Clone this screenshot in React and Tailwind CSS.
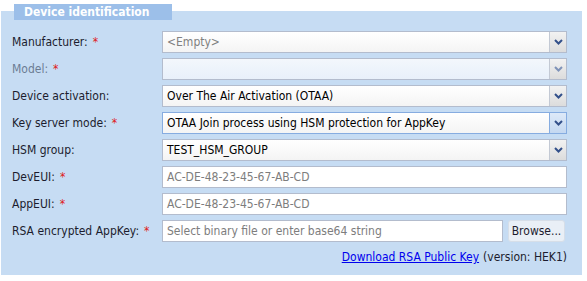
const font = { fontFamily: '"DejaVu Sans Condensed", "DejaVu Sans", sans-serif' };

function Chevron({ light }) {
  return (
    <svg width="9" height="6" viewBox="0 0 9 6">
      <path d="M1 1 L4.5 4.5 L8 1" fill="none" stroke={light ? "#7f93b8" : "#33508a"} strokeWidth="2" />
    </svg>
  );
}

function Label({ text, required, disabled }) {
  return (
    <div className={`w-[150px] shrink-0 pl-[11px] ${disabled ? "text-[#6c7c93]" : "text-[#1c1c2e]"}`}>
      {text}
      {required && <span className="ml-[5px] text-[#e01818]">*</span>}
    </div>
  );
}

function Select({ value, placeholder, disabled, focused }) {
  return (
    <div
      className={`ml-[11px] flex h-[22px] w-[405px] items-stretch border ${
        focused ? "border-[#86ace0]" : "border-[#b3bccd]"
      } ${disabled ? "bg-gradient-to-b from-[#f3f7fc] to-[#e8f0fa]" : "bg-gradient-to-b from-white to-[#f4f4f4]"}`}
    >
      <div className={`flex flex-1 items-center pl-[4px] ${placeholder ? "text-[#808080]" : "text-black"}`}>
        {value}
      </div>
      <div
        className={`flex w-[17px] items-center justify-center border-l ${
          focused ? "border-[#86ace0] bg-gradient-to-b from-[#dde9f8] to-[#c4d8f1]" : "border-[#c3c9d4] bg-gradient-to-b from-[#f2f2f2] to-[#dcdcdc]"
        }`}
      >
        <Chevron light={disabled} />
      </div>
    </div>
  );
}

function Input({ placeholder, width = "w-[405px]" }) {
  return (
    <div className={`ml-[11px] flex h-[22px] ${width} items-center border border-[#b3bccd] bg-white pl-[4px] text-[#7d7d7d]`}>
      {placeholder}
    </div>
  );
}

function Row({ children }) {
  return <div className="flex h-[27px] items-center">{children}</div>;
}

export default function App() {
  return (
    <div className="h-[281px] w-[587px] bg-white text-[12px]" style={font}>
      <div className="relative pl-[1px] pt-[11px]">
        <div className="absolute left-[14px] top-[4px] flex h-[16px] w-[158px] items-center bg-[#9cbfe9] pl-[10px] text-[12px] font-bold text-white">
          Device identification
        </div>
        <div className="h-[264px] w-[581px] bg-[#c6dcf3] pt-[17px]">
          <Row>
            <Label text="Manufacturer:" required />
            <Select value="<Empty>" placeholder />
          </Row>
          <Row>
            <Label text="Model:" required disabled />
            <Select value="" disabled />
          </Row>
          <Row>
            <Label text="Device activation:" />
            <Select value="Over The Air Activation (OTAA)" />
          </Row>
          <Row>
            <Label text="Key server mode:" required />
            <Select value="OTAA Join process using HSM protection for AppKey" focused />
          </Row>
          <Row>
            <Label text="HSM group:" />
            <Select value="TEST_HSM_GROUP" />
          </Row>
          <Row>
            <Label text="DevEUI:" required />
            <Input placeholder="AC-DE-48-23-45-67-AB-CD" />
          </Row>
          <Row>
            <Label text="AppEUI:" required />
            <Input placeholder="AC-DE-48-23-45-67-AB-CD" />
          </Row>
          <Row>
            <Label text="RSA encrypted AppKey:" required />
            <Input placeholder="Select binary file or enter base64 string" width="w-[341px]" />
            <button className="ml-[5px] h-[22px] w-[57px] rounded-[3px] border border-[#d6dee8] bg-[#e9eff6] text-[12px] text-[#1c1c2e]">
              Browse...
            </button>
          </Row>
          <div className="flex w-[566px] justify-end pt-[4px] text-[#1c1c2e]">
            <a href="#" className="text-[#0000ee] underline">
              Download RSA Public Key
            </a>
            <span className="ml-[4px]">(version: HEK1)</span>
          </div>
        </div>
      </div>
    </div>
  );
}
